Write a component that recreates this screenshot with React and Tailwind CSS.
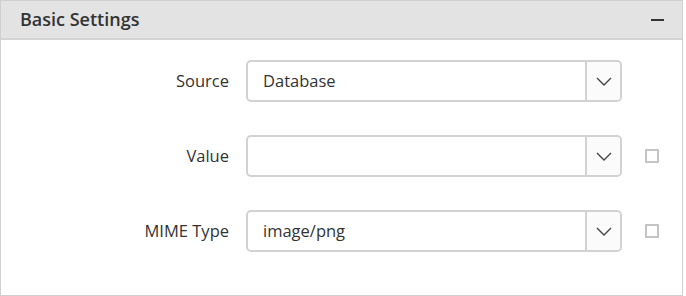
import React from 'react';

const font = { fontFamily: '"Open Sans", "Noto Sans", sans-serif' };

// Dropdown with chevron button
function Select({ value }) {
  return (
    <div className="flex h-[42px] w-[376px] rounded-[5px] border-2 border-[#d2d2d2] bg-white">
      <div className="flex flex-1 items-center pl-[15px] text-[16.5px] text-[#333]">{value}</div>
      <div className="flex w-[35px] items-center justify-center border-l-2 border-[#d2d2d2] bg-[#fbfbfb] rounded-r-[4px]">
        <svg width="16" height="9" viewBox="0 0 16 9" fill="none">
          <path d="M1 1l7 7 7-7" stroke="#444" strokeWidth="1.4" />
        </svg>
      </div>
    </div>
  );
}

function Row({ label, value, check }) {
  return (
    <div className="flex items-center">
      <div className="w-[229px] text-right text-[16.5px] text-[#333]">{label}</div>
      <div className="ml-[17px]">
        <Select value={value} />
      </div>
      {check && <div className="ml-[23px] h-[14px] w-[14px] border-2 border-[#c4c4c4]" />}
    </div>
  );
}

export default function App() {
  return (
    <div className="bg-white" style={font}>
      <div className="h-[296px] w-[683px] border border-[#cfcfcf]">
        <div className="flex h-[39px] items-center justify-between border-b-2 border-[#d4d4d4] bg-[#e3e3e3] pl-[19px] pr-[18px]">
          <span className="text-[18px] font-semibold text-[#333]">Basic Settings</span>
          <span className="block h-[2px] w-[13px] bg-[#333]" />
        </div>
        <div className="flex flex-col gap-[33px] pt-[20px] -ml-[1px]">
          <Row label="Source" value="Database" />
          <Row label="Value" value="" check />
          <Row label="MIME Type" value="image/png" check />
        </div>
      </div>
    </div>
  );
}
